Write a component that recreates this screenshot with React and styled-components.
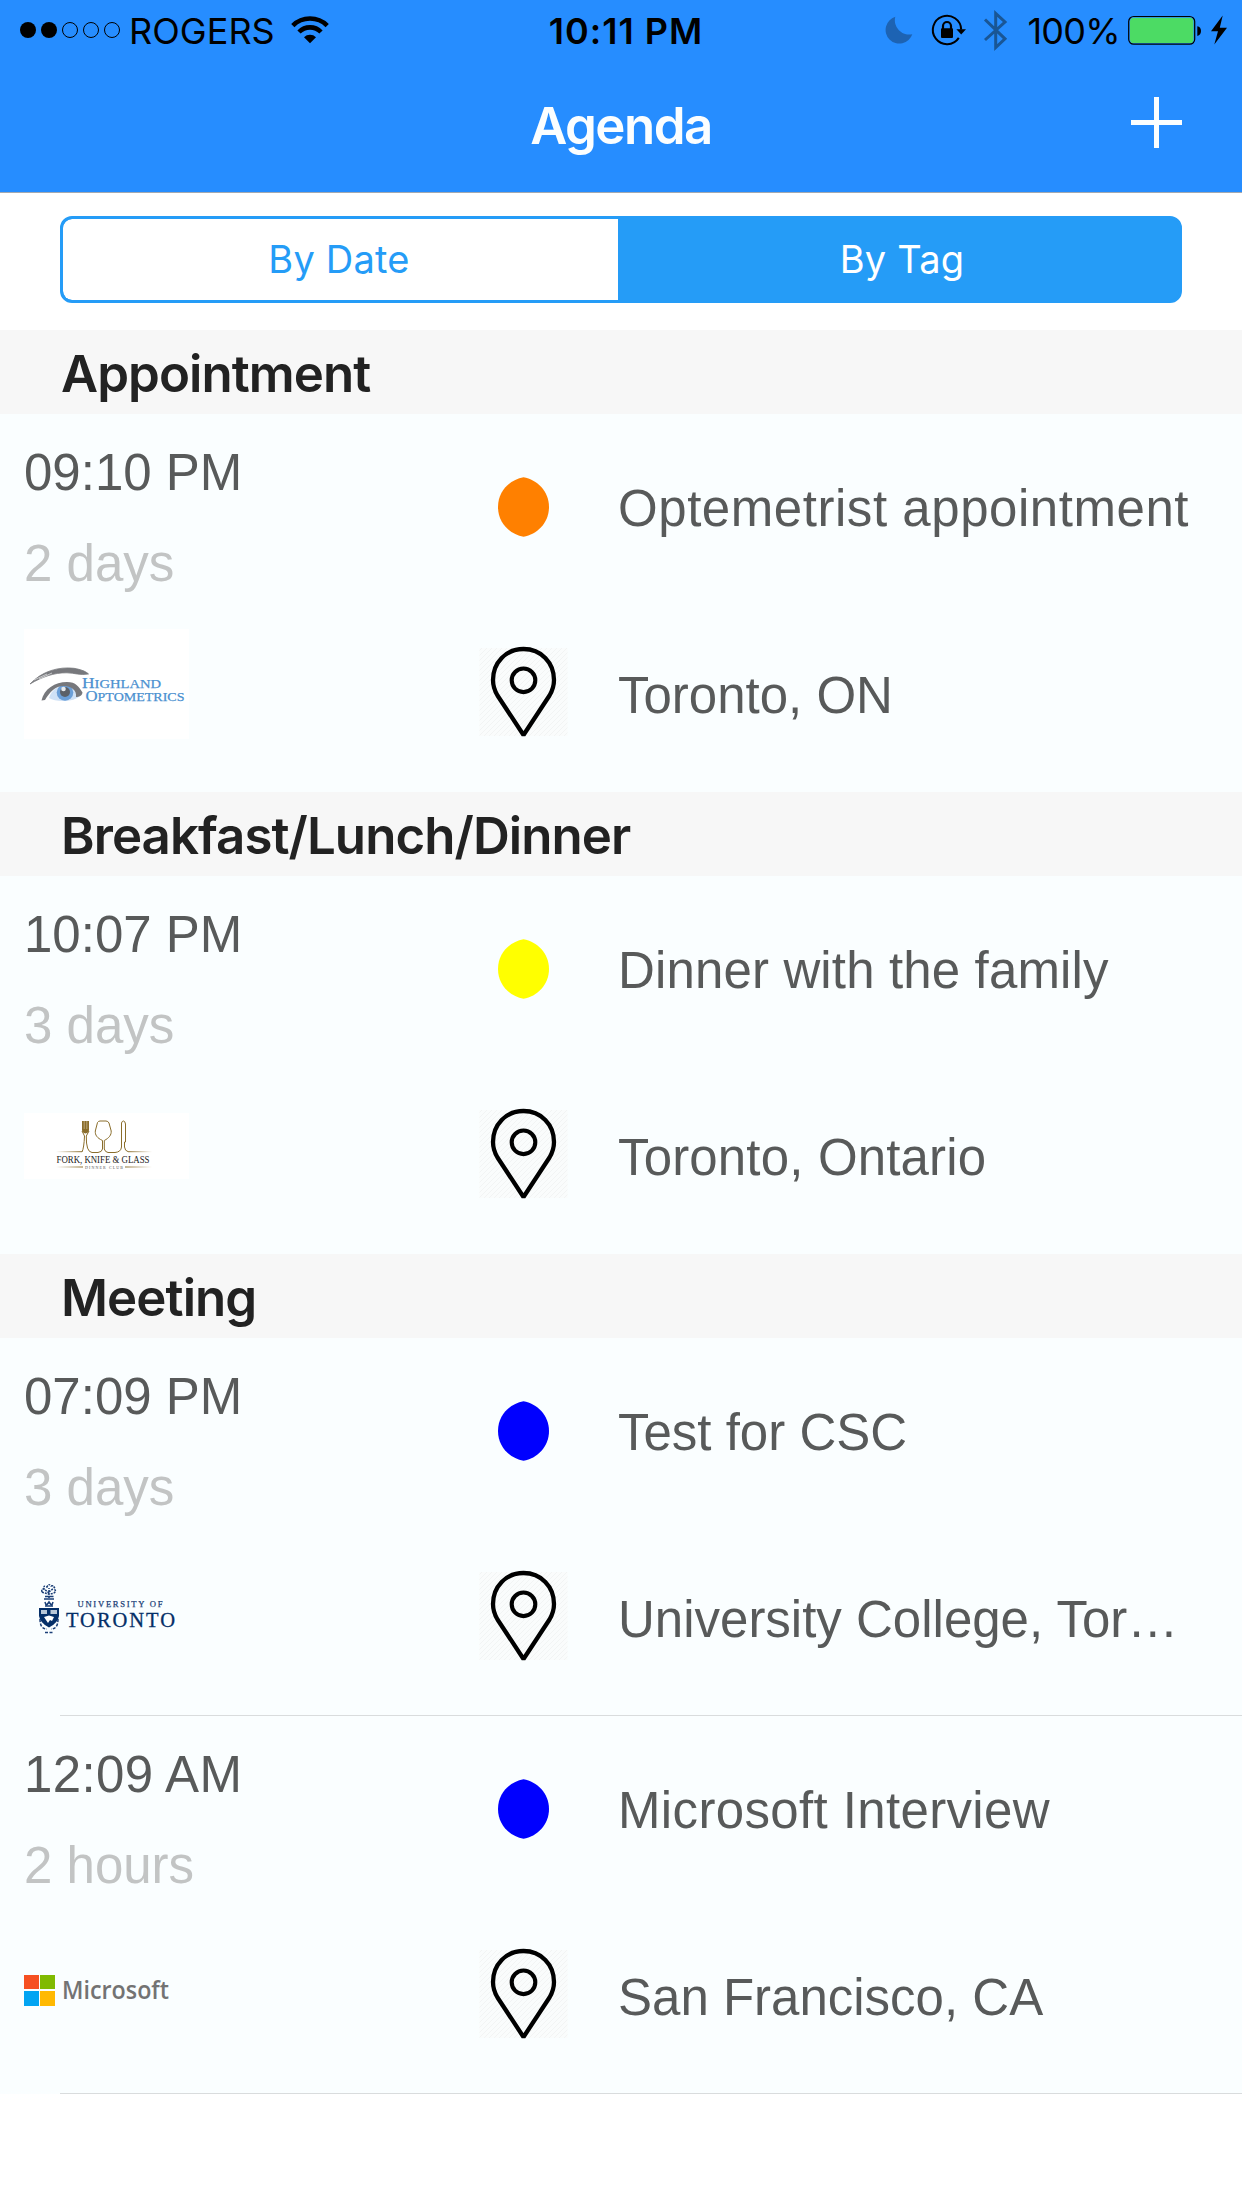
import React from 'react';
import styled, { createGlobalStyle } from 'styled-components';

const Global = createGlobalStyle`
  *, *::before, *::after { box-sizing: border-box; }
  html, body { margin: 0; background: #fff; }
  body { width: 1242px; height: 2208px; overflow: hidden; }
  svg { display: block; flex: none; }
`;

const ui = `Inter, Roboto, sans-serif`;
const body = `"Liberation Sans", Arial, sans-serif`;

const Screen = styled.main`
  width: 1242px;
  height: 2208px;
  display: flex;
  flex-direction: column;
  background: #fff;
`;

const Header = styled.header`
  height: 193px;
  flex: none;
  background: #268dff;
  border-bottom: 1px solid #a3a9b1;
  color: #fbfeff;
`;

const StatusBar = styled.div`
  height: 60px;
  display: grid;
  grid-template-columns: 1fr auto 1fr;
  align-items: center;
  padding: 0 15px 0 19px;
  color: #000;
  font: 400 36px/58px ${ui};
`;

const StatusGroup = styled.div`
  display: flex;
  align-items: center;
  height: 60px;
  justify-content: ${(p) => (p.$end ? 'flex-end' : 'flex-start')};
`;

const Carrier = styled.span`
  margin: 2px 16px 0 8px;
  letter-spacing: 0.05px;
`;

const Clock = styled.span`
  padding: 2px 0 0 6px;
  font-weight: 600;
  letter-spacing: 1px;
`;

const Percent = styled.span`
  margin: 2px 7px 0 19px;
  letter-spacing: -0.7px;
`;

const NavBar = styled.div`
  height: 132px;
  display: grid;
  grid-template-columns: 1fr auto 1fr;
  align-items: center;
  padding: 0 60px;
`;

const NavTitle = styled.h1`
  grid-column: 2;
  margin: 0;
  font: 600 51px/66px ${ui};
  letter-spacing: -1.5px;
`;

const AddButton = styled.button`
  justify-self: end;
  margin-top: -7px;
  padding: 0;
  border: 0;
  background: none;
`;

const Filter = styled.div`
  height: 137px;
  flex: none;
  padding: 23px 60px 0;
`;

const Segments = styled.div`
  height: 87px;
  display: grid;
  grid-template-columns: 555px 1fr;
  border: 3px solid #259cf7;
  border-radius: 12px;
  overflow: hidden;
  background: #259cf7;
`;

const Segment = styled.button`
  border: 0;
  padding: ${(p) => (p.$active ? '0 0 1px 7px' : '0 3px 1px 0')};
  border-radius: ${(p) => (p.$active ? '0' : '9px 0 0 9px')};
  background: ${(p) => (p.$active ? '#259cf7' : '#fff')};
  color: ${(p) => (p.$active ? '#fff' : '#259cf7')};
  font: 400 38px/80px ${ui};
  letter-spacing: 0.2px;
`;

const SectionTitle = styled.h2`
  height: 84px;
  flex: none;
  margin: 0;
  padding: 2px 0 0 61px;
  background: #f7f7f7;
  color: #222;
  font: 600 51px/84px ${ui};
  letter-spacing: -0.93px;
`;

const Row = styled.article`
  height: 378px;
  flex: none;
  display: grid;
  grid-template-columns: 455px 89px 1fr;
  padding-left: 24px;
  background-color: #fafeff;
  background-image: ${(p) => (p.$line ? 'linear-gradient(#d9dcdd, #d9dcdd)' : 'none')};
  background-size: 1182px 1px;
  background-position: 60px 100%;
  background-repeat: no-repeat;
`;

const When = styled.div`
  padding-top: 30px;
  display: flex;
  flex-direction: column;
`;

const Line = styled.div`
  font: 400 51px/58px ${body};
  color: ${(p) => (p.$muted ? '#c2c4c4' : '#585a5a')};
  letter-spacing: ${(p) => p.$track || 0}px;
  white-space: nowrap;
  overflow: hidden;
  text-overflow: ellipsis;
`;

const Countdown = styled(Line)`
  margin-top: 33px;
`;

const LogoSlot = styled.div`
  height: 164px;
  margin-top: 9px;
  display: flex;
  align-items: center;
`;

const Marks = styled.div`
  display: flex;
  flex-direction: column;
  align-items: center;
  padding-top: 63px;
  gap: 109px;
`;

const What = styled.div`
  padding: 66px 40px 0 50px;
  display: flex;
  flex-direction: column;
  gap: 129px;
  min-width: 0;
`;

function Signal() {
  return (
    <svg width="102" height="18" viewBox="19 21 102 18">
      {[28, 49, 70, 91, 112].map((x, i) => (
        <circle key={x} cx={x} cy="30" r={i < 2 ? 8 : 7.5} fill={i < 2 ? '#000' : 'none'} stroke="#000" strokeWidth={i < 2 ? 0 : 1} />
      ))}
    </svg>
  );
}

function Wifi() {
  return (
    <svg width="38" height="28" viewBox="0 0 38 28">
      <g fill="none" stroke="#000" strokeWidth="4.6">
        <path d="M1.8 9.6A24.5 24.5 0 0 1 36.2 9.6" />
        <path d="M8 16A15.5 15.5 0 0 1 30 16" />
      </g>
      <path d="M13 21.2A8.6 8.6 0 0 1 25 21.2L19 27.2Z" />
    </svg>
  );
}

function StatusIcons() {
  return (
    <svg width="124" height="60" viewBox="884 0 124 60">
      <path d="M895.3 16.8A13.7 13.7 0 1 0 912.3 34.2A14.2 14.2 0 0 1 895.3 16.8Z" fill="#1d63b3" />
      <path d="M958.8 37.9A14.2 14.2 0 1 1 961.2 29.6" fill="none" stroke="#000" strokeWidth="2" />
      <path d="M956.4 29.3H966L961.2 34.4Z" />
      <rect x="941" y="28.3" width="12" height="9.8" rx="1" />
      <path d="M943 29V26a4 4 0 0 1 8 0V29" fill="none" stroke="#000" strokeWidth="2.2" />
      <path d="M985 19.5L1005 38.8L995.7 47.5V13.5L1005 22L985 40" fill="none" stroke="#195695" strokeWidth="3" />
    </svg>
  );
}

function Battery() {
  return (
    <svg width="100" height="60" viewBox="1127 0 100 60">
      <rect x="1128.7" y="16.5" width="66" height="27.7" rx="5" fill="none" stroke="#000" strokeWidth="1.2" />
      <rect x="1130" y="17.8" width="63.4" height="25.2" rx="3.6" fill="#4cdb64" />
      <path d="M1197.3 26.2Q1201 27 1201 31Q1201 35 1197.3 36Z" />
      <path d="M1222.7 15.5L1211 31.2H1218L1214.3 44.5L1227 27.7H1219.8Z" />
    </svg>
  );
}

function Plus() {
  return (
    <svg width="51" height="51" viewBox="0 0 51 51">
      <path d="M25.5 0V51M0 25.5H51" stroke="#fbfeff" strokeWidth="5" />
    </svg>
  );
}

function Dot({ color }) {
  return (
    <svg width="51" height="60" viewBox="0 0 51 60">
      <path d="M25.5 0.2C39 2.6 51 14 51 30S39 57.4 25.5 59.8C12 57.4 0 46 0 30S12 2.6 25.5 0.2Z" fill={color} />
    </svg>
  );
}

function Pin({ id }) {
  return (
    <svg width="89" height="92" viewBox="0 0 89 92">
      <defs>
        <pattern id={id} width="5" height="5" patternUnits="userSpaceOnUse">
          <rect width="5" height="5" fill="#fafcfc" />
          <path d="M-1 6L6 -1M-1 1L1 -1M4 6L6 4" stroke="#f2f4f4" strokeWidth="1" />
        </pattern>
      </defs>
      <rect x="0.5" y="2" width="88" height="88" fill={`url(#${id})`} />
      <path d="M44.5 89L18.5 49.5C15.5 44.5 14 40 14 34C14 16.5 27 3 44.5 3S75 16.5 75 34C75 40 73.5 44.5 70.5 49.5Z" fill="none" stroke="#000" strokeWidth="4.3" strokeLinejoin="bevel" />
      <circle cx="44.5" cy="34.3" r="11.8" fill="none" stroke="#000" strokeWidth="4.1" />
    </svg>
  );
}

const serif = '"Liberation Serif", "Times New Roman", serif';

function HighlandLogo() {
  return (
    <svg width="165" height="110" viewBox="24 629 165 110">
      <rect x="24" y="629" width="165" height="110" fill="#fff" />
      <path d="M30 684C42 671 59 666.500 74 668.300C81 669.500 86 671.500 88.500 674C80 675.500 75 673 67 672.800C54 672.500 42 677 30 684Z" fill="#77787c" stroke="#77787c" strokeWidth="0.8" />
      <path d="M34 680L47 674M39 679L52 673" stroke="#fff" strokeWidth="0.6" />
      <path d="M49 698C52 688 60 685 69 685.500C76 686 80 691 81.500 694C77 700 70 701 63 701C57 701 52 700 49 698Z" fill="#cfe1f6" />
      <circle cx="65" cy="692.500" r="8.300" fill="#6b9fd8" />
      <circle cx="65" cy="692" r="5" fill="#5b6068" />
      <circle cx="63.500" cy="689" r="2.300" fill="#e6eaee" />
      <path d="M41.500 700.500C44 689 55 682 67 682C76 682 79 687 82.500 692.500C82 696 79 697 76 697C77 690 71 686 64 686C55 686 50 692 45 700Z" fill="#77787c" />
      <g fill="#4a90d0" stroke="#4a90d0" strokeWidth="0.25" fontFamily={serif}>
        <text x="82" y="687.700" fontSize="15.500" textLength="79" lengthAdjust="spacingAndGlyphs">H<tspan fontSize="13">IGHLAND</tspan></text>
        <text x="85.500" y="700.500" fontSize="15.500" textLength="99" lengthAdjust="spacingAndGlyphs">O<tspan fontSize="13">PTOMETRICS</tspan></text>
      </g>
    </svg>
  );
}

function ForkLogo() {
  return (
    <svg width="165" height="66" viewBox="0 0 165 66">
      <defs>
        <linearGradient id="goldLeft"><stop offset="0" stopColor="#8a6d2b" stopOpacity="0" /><stop offset="1" stopColor="#8a6d2b" /></linearGradient>
        <linearGradient id="goldRight"><stop offset="0" stopColor="#8a6d2b" /><stop offset="1" stopColor="#8a6d2b" stopOpacity="0" /></linearGradient>
      </defs>
      <rect width="165" height="66" fill="#fff" />
      <path d="M58 8V17Q58 19.500 61.500 20.500Q65 19.500 65 17V8Z" fill="#8a6d2b" />
      <path d="M60.200 8V16M62.800 8V16" stroke="#e8dfc8" strokeWidth="0.5" />
      <g fill="none" stroke="#8a6d2b" strokeWidth="1">
        <path d="M58 39Q60 35 60.500 23L58 18M65 18L62.300 23Q62 39 68 39.500H74Q78 39 78.500 36V27.500C73 25 71 22 71.300 18L73.500 9.500Q74.500 8 76 8H82Q84 8 85 10L87.200 18C87.500 22 85 25 80.300 27.500V36Q81 39 84 39.500H91Q97 39 97.500 34V10Q98 8 99.500 8T101.500 11V29H100.500V34Q101 38 104 38.600" />
      </g>
      <rect x="32" y="38.200" width="26" height="1" fill="url(#goldLeft)" />
      <rect x="104" y="38.200" width="24" height="1" fill="url(#goldRight)" />
      <text x="32.500" y="49.500" fontSize="9.500" textLength="93" lengthAdjust="spacingAndGlyphs" fontFamily={serif} fill="#222">FORK, KNIFE &amp; GLASS</text>
      <text x="61" y="56" fontSize="4" textLength="38" fontFamily={serif} fill="#555">DINNER CLUB</text>
      <rect x="32" y="53.500" width="27" height="1" fill="url(#goldLeft)" />
      <rect x="101" y="53.500" width="27" height="1" fill="url(#goldRight)" />
    </svg>
  );
}

function TorontoLogo() {
  return (
    <svg width="165" height="60" viewBox="24 1578 165 60">
      <rect x="39" y="1600" width="20" height="22" fill="#fff" />
      <g fill="none" stroke="#1b3f77" strokeWidth="1.500">
        <path d="M49 1598V1588M49 1593L43 1588M49 1592L55 1587M42 1592Q41 1589 44 1589Q43 1585 47 1587Q49 1583 51 1586Q55 1585 54 1589Q57 1591 54 1593Q49 1595 42 1592" strokeDasharray="2 1" />
        <path d="M45 1596.500H53.500M44 1599H54" />
        <path d="M45 1602Q46 1607 49 1602Q52 1607 53 1602M45 1606H53" />
        <path d="M40 1619Q40 1629 47 1629M58 1619Q58 1629 51 1629M45 1632.500H53" strokeDasharray="3 1.500" />
      </g>
      <path d="M39 1608H59V1616Q58 1623 49 1627.500Q40 1623 39 1616Z" fill="#052f68" />
      <path d="M41 1610H47V1614H41ZM50.500 1610H57V1614H50.500Z" fill="#b8c7d8" />
      <path d="M44 1617L49 1615.500L54 1617L52 1621L50 1620L48 1623Z" fill="#fff" />
      <text x="77.500" y="1606.700" fontSize="8.600" textLength="85" fontFamily={serif} fill="#1b3f77" stroke="#1b3f77" strokeWidth="0.250">UNIVERSITY OF</text>
      <text x="66" y="1626.700" fontSize="20.500" textLength="109" fontFamily={serif} fill="#052f68" stroke="#052f68" strokeWidth="0.300">TORONTO</text>
    </svg>
  );
}

function MicrosoftLogo() {
  return (
    <svg width="165" height="40" viewBox="24 1966 165 40">
      <rect x="24" y="1975" width="15" height="14" fill="#f65022" />
      <rect x="40" y="1975" width="15" height="14" fill="#80ba01" />
      <rect x="24" y="1991" width="15" height="15" fill="#02a4f2" />
      <rect x="40" y="1991" width="15" height="15" fill="#ffb902" />
      <text x="62" y="1999.300" fontSize="26" fontWeight="600" textLength="107" lengthAdjust="spacingAndGlyphs" fontFamily='"Open Sans", "Noto Sans", sans-serif' fill="#737373">Microsoft</text>
    </svg>
  );
}

const agenda = [
  {
    tag: 'Appointment',
    events: [{ time: '09:10 PM', left: '2 days', title: 'Optemetrist appointment', titleTrack: 0.55, place: 'Toronto, ON', color: '#ff8000', Logo: HighlandLogo }],
  },
  {
    tag: 'Breakfast/Lunch/Dinner',
    events: [{ time: '10:07 PM', left: '3 days', title: 'Dinner with the family', titleTrack: 0.14, place: 'Toronto, Ontario', placeTrack: 0.16, color: '#ffff00', Logo: ForkLogo }],
  },
  {
    tag: 'Meeting',
    events: [
      { time: '07:09 PM', left: '3 days', title: 'Test for CSC', place: 'University College, Tor…', color: '#0000ff', Logo: TorontoLogo, line: true },
      { time: '12:09 AM', timeTrack: 0.35, left: '2 hours', title: 'Microsoft Interview', titleTrack: 0.36, place: 'San Francisco, CA', color: '#0000ff', Logo: MicrosoftLogo, line: true },
    ],
  },
];

export default function App() {
  return (
    <Screen>
      <Global />
      <Header>
        <StatusBar>
          <StatusGroup>
            <Signal />
            <Carrier>ROGERS</Carrier>
            <Wifi />
          </StatusGroup>
          <Clock>10:11 PM</Clock>
          <StatusGroup $end>
            <StatusIcons />
            <Percent>100%</Percent>
            <Battery />
          </StatusGroup>
        </StatusBar>
        <NavBar>
          <NavTitle>Agenda</NavTitle>
          <AddButton aria-label="Add"><Plus /></AddButton>
        </NavBar>
      </Header>
      <Filter>
        <Segments>
          <Segment>By Date</Segment>
          <Segment $active>By Tag</Segment>
        </Segments>
      </Filter>
      {agenda.map((group) => (
        <React.Fragment key={group.tag}>
          <SectionTitle>{group.tag}</SectionTitle>
          {group.events.map(({ time, timeTrack, left, title, titleTrack, place, placeTrack, color, Logo, line }) => (
            <Row key={time} $line={line}>
              <When>
                <Line $track={timeTrack}>{time}</Line>
                <Countdown $muted>{left}</Countdown>
                <LogoSlot><Logo /></LogoSlot>
              </When>
              <Marks>
                <Dot color={color} />
                <Pin id={`hatch-${time.slice(0, 2)}`} />
              </Marks>
              <What>
                <Line $track={titleTrack}>{title}</Line>
                <Line $track={placeTrack}>{place}</Line>
              </What>
            </Row>
          ))}
        </React.Fragment>
      ))}
    </Screen>
  );
}
